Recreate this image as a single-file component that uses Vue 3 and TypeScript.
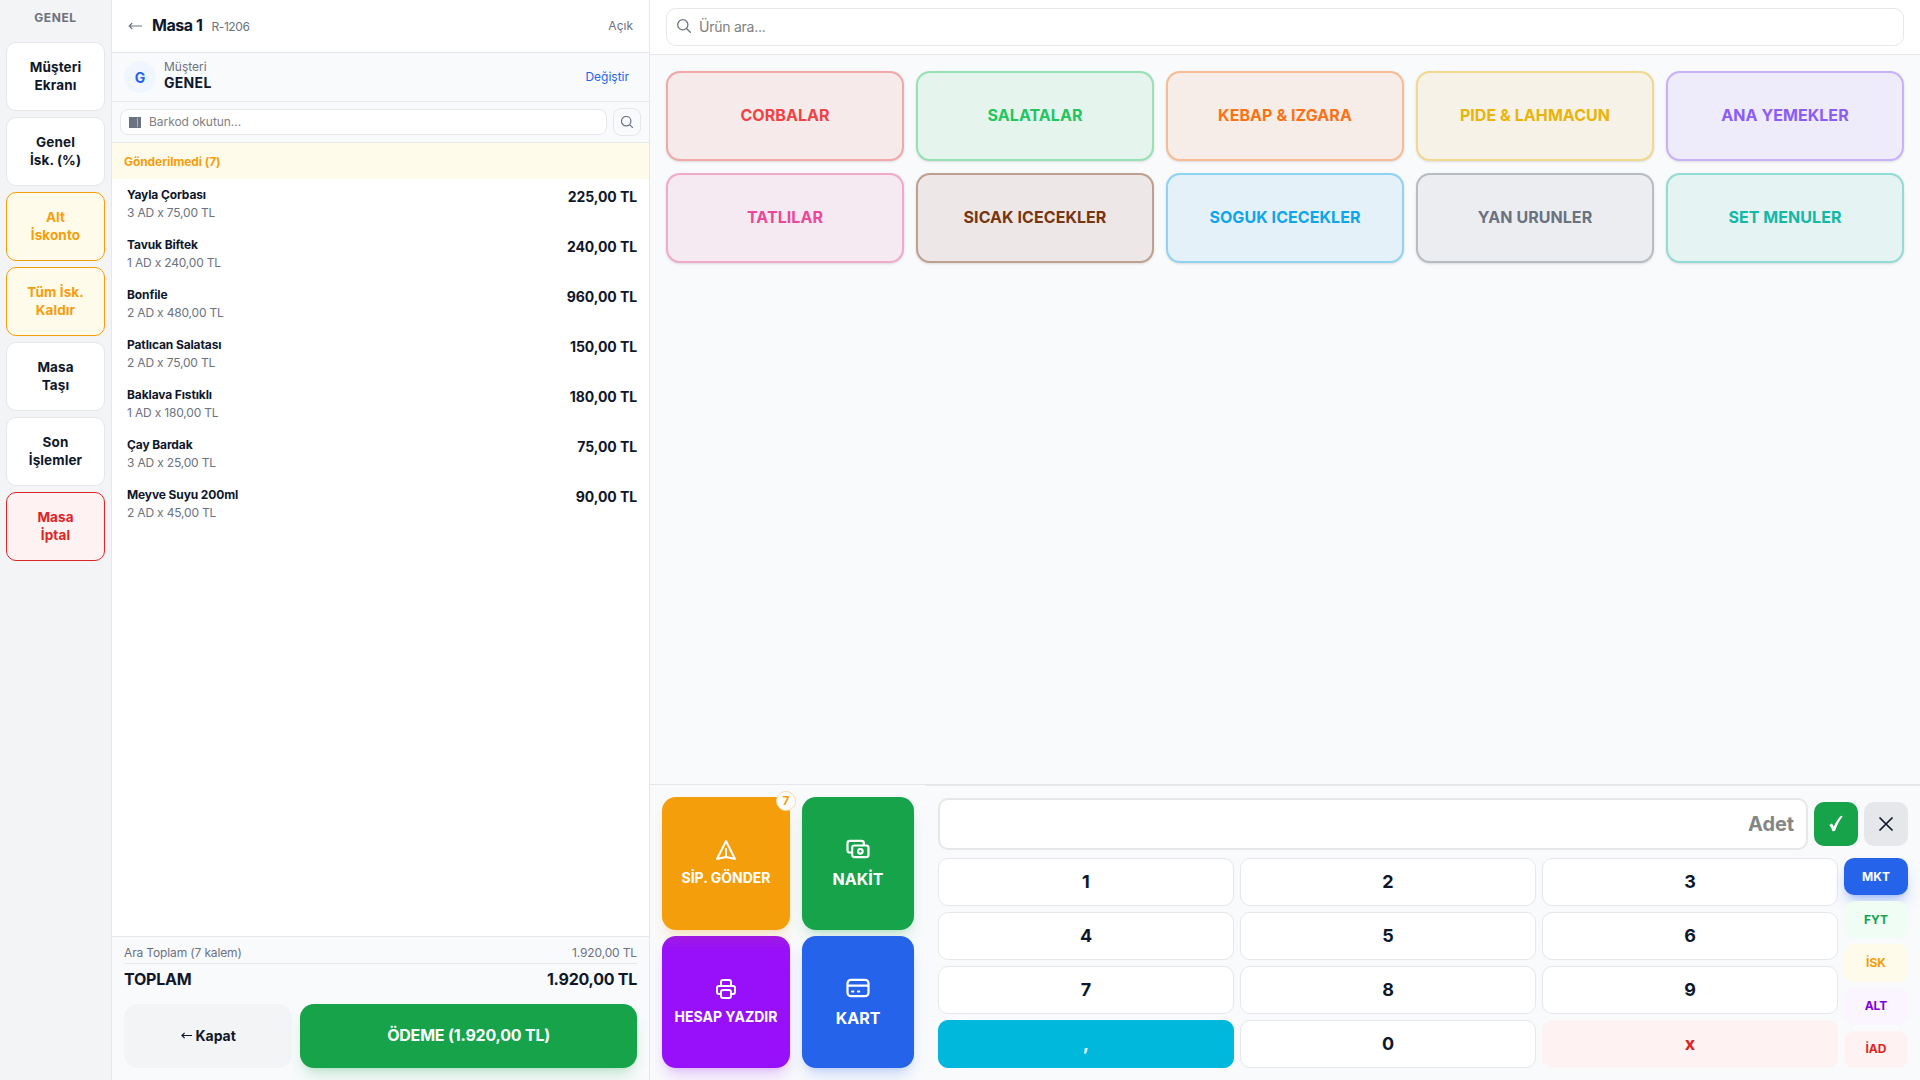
<script setup lang="ts">
interface SideAction { lines: [string, string]; tone: string }
interface OrderLine { name: string; detail: string; total: string }
interface Category { name: string; color: string }
interface Key { label: string; tone: string }

const actions: SideAction[] = [
  { lines: ['Müşteri', 'Ekranı'], tone: '' },
  { lines: ['Genel', 'İsk. (%)'], tone: '' },
  { lines: ['Alt', 'İskonto'], tone: 'warn' },
  { lines: ['Tüm İsk.', 'Kaldır'], tone: 'warn' },
  { lines: ['Masa', 'Taşı'], tone: '' },
  { lines: ['Son', 'İşlemler'], tone: '' },
  { lines: ['Masa', 'İptal'], tone: 'danger' },
]

const orderLines: OrderLine[] = [
  { name: 'Yayla Çorbası', detail: '3 AD x 75,00 TL', total: '225,00 TL' },
  { name: 'Tavuk Biftek', detail: '1 AD x 240,00 TL', total: '240,00 TL' },
  { name: 'Bonfile', detail: '2 AD x 480,00 TL', total: '960,00 TL' },
  { name: 'Patlıcan Salatası', detail: '2 AD x 75,00 TL', total: '150,00 TL' },
  { name: 'Baklava Fıstıklı', detail: '1 AD x 180,00 TL', total: '180,00 TL' },
  { name: 'Çay Bardak', detail: '3 AD x 25,00 TL', total: '75,00 TL' },
  { name: 'Meyve Suyu 200ml', detail: '2 AD x 45,00 TL', total: '90,00 TL' },
]

const categories: Category[] = [
  { name: 'CORBALAR', color: '#ef4444' },
  { name: 'SALATALAR', color: '#22c55e' },
  { name: 'KEBAP & IZGARA', color: '#f97316' },
  { name: 'PIDE & LAHMACUN', color: '#eab308' },
  { name: 'ANA YEMEKLER', color: '#8b5cf6' },
  { name: 'TATLILAR', color: '#ec4899' },
  { name: 'SICAK ICECEKLER', color: '#78350f' },
  { name: 'SOGUK ICECEKLER', color: '#0ea5e9' },
  { name: 'YAN URUNLER', color: '#6b7280' },
  { name: 'SET MENULER', color: '#14b8a6' },
]

const keys: Key[] = [
  ...['1', '2', '3', '4', '5', '6', '7', '8', '9'].map((label) => ({ label, tone: '' })),
  { label: ',', tone: 'comma' },
  { label: '0', tone: '' },
  { label: 'x', tone: 'clear' },
]

const modes: Key[] = [
  { label: 'MKT', tone: 'mkt' },
  { label: 'FYT', tone: 'fyt' },
  { label: 'İSK', tone: 'isk' },
  { label: 'ALT', tone: 'alt' },
  { label: 'İAD', tone: 'iad' },
]
</script>

<template>
  <div class="pos">
    <aside class="side">
      <div class="side-title">GENEL</div>
      <button v-for="a in actions" :key="a.lines.join()" class="side-btn" :class="a.tone">
        <span>{{ a.lines[0] }}</span><span>{{ a.lines[1] }}</span>
      </button>
    </aside>

    <section class="order">
      <header class="order-head">
        <svg class="back" width="14" height="8" viewBox="0 0 14 8"><path d="M14 4H1.200M4.200 1L1.200 4l3 3" fill="none" stroke="#6b7280" stroke-width="1.100" /></svg>
        <span class="table-name">Masa 1</span>
        <span class="receipt">R-1206</span>
        <span class="state">Açık</span>
      </header>
      <div class="customer">
        <div class="avatar">G</div>
        <div class="customer-text">
          <span class="customer-label">Müşteri</span>
          <span class="customer-name">GENEL</span>
        </div>
        <button class="change">Değiştir</button>
      </div>
      <div class="barcode">
        <div class="barcode-input">
          <svg width="12" height="11" viewBox="0 0 12 11"><path d="M0 0h12v11H0z" fill="#6b7280" /><path d="M8.500 .8v9.400" stroke="#b4b8bf" stroke-width=".9" /></svg>
          <span>Barkod okutun...</span>
        </div>
        <button class="barcode-search">
          <svg width="12" height="12" viewBox="0 0 12 12" fill="none" stroke="#6b7280" stroke-width="1.200" stroke-linecap="round"><circle cx="5.200" cy="5.200" r="4.700" /><path d="M8.600 8.600L11.600 11.600" /></svg>
        </button>
      </div>
      <div class="group-title">Gönderilmedi (7)</div>
      <div class="lines">
        <div v-for="l in orderLines" :key="l.name" class="line">
          <div class="line-info">
            <span class="line-name">{{ l.name }}</span>
            <span class="line-detail">{{ l.detail }}</span>
          </div>
          <span class="line-total">{{ l.total }}</span>
        </div>
      </div>
      <footer class="totals">
        <div class="subtotal"><span>Ara Toplam (7 kalem)</span><span>1.920,00 TL</span></div>
        <div class="total"><span>TOPLAM</span><span class="total-num">1.920,00 TL</span></div>
        <div class="pay-row">
          <button class="close-btn">
            <svg width="11" height="7" viewBox="0 0 11 7"><path d="M11 3.500H1M3.600 .9L1 3.500l2.600 2.600" fill="none" stroke="#0f172a" stroke-width="1.200" /></svg>
            <span>Kapat</span>
          </button>
          <button class="pay-btn">ÖDEME (1.920,00 TL)</button>
        </div>
      </footer>
    </section>

    <main class="main">
      <div class="topbar">
        <div class="search">
          <svg width="14" height="14" viewBox="0 0 14 14" fill="none" stroke="#6b7280" stroke-width="1.300" stroke-linecap="round"><circle cx="5.800" cy="5.800" r="5.100" /><path d="M9.500 9.500l3.800 3.800" /></svg>
          <span>Ürün ara...</span>
        </div>
      </div>
      <div class="catalog">
        <button v-for="c in categories" :key="c.name" class="cat" :style="{ '--c': c.color }">{{ c.name }}</button>
      </div>
      <div class="bottom">
        <div class="quick">
          <button class="q send">
            <svg width="24" height="24" viewBox="0 0 24 24" fill="none" stroke="#fff" stroke-width="2" stroke-linecap="round" stroke-linejoin="round"><path d="M12 19l9 2-9-18-9 18 9-2zm0 0v-8" /></svg>
            <span>SİP. GÖNDER</span>
            <i class="badge">7</i>
          </button>
          <button class="q big cash">
            <svg width="28" height="28" viewBox="0 0 24 24" fill="none" stroke="#fff" stroke-width="1.900" stroke-linecap="round" stroke-linejoin="round"><path d="M17 9V7a2 2 0 00-2-2H5a2 2 0 00-2 2v6a2 2 0 002 2h2m2 4h10a2 2 0 002-2v-6a2 2 0 00-2-2H9a2 2 0 00-2 2v6a2 2 0 002 2zm7-5a2 2 0 11-4 0 2 2 0 014 0z" /></svg>
            <span>NAKİT</span>
          </button>
          <button class="q print">
            <svg width="24" height="24" viewBox="0 0 24 24" fill="none" stroke="#fff" stroke-width="2" stroke-linecap="round" stroke-linejoin="round"><path d="M17 17h2a2 2 0 002-2v-4a2 2 0 00-2-2H5a2 2 0 00-2 2v4a2 2 0 002 2h2m2 4h6a2 2 0 002-2v-4a2 2 0 00-2-2H9a2 2 0 00-2 2v4a2 2 0 002 2zm8-12V5a2 2 0 00-2-2H9a2 2 0 00-2 2v4h10z" /></svg>
            <span>HESAP YAZDIR</span>
          </button>
          <button class="q big card">
            <svg width="28" height="28" viewBox="0 0 24 24" fill="none" stroke="#fff" stroke-width="1.900" stroke-linecap="round" stroke-linejoin="round"><path d="M3 10h18M7 15h1m4 0h1m-7 4h12a3 3 0 003-3V8a3 3 0 00-3-3H6a3 3 0 00-3 3v8a3 3 0 003 3z" /></svg>
            <span>KART</span>
          </button>
        </div>
        <div class="pad">
          <div class="pad-top">
            <div class="qty">Adet</div>
            <button class="ok">
              <svg width="16" height="18" viewBox="0 0 16 18"><path d="M1.200 10l2.600-1.400c.9.900 1.500 1.800 2 3.100C7.600 7.500 10 3.500 13 .8l1.700.4C11.500 5.200 9 10 7 15.900l-2.500.4C3.800 13.800 2.700 11.700 1.200 10z" fill="#fff" /></svg>
            </button>
            <button class="cancel">
              <svg width="16" height="16" viewBox="0 0 16 16"><path d="M1.500 1.500l13 13M14.500 1.500l-13 13" stroke="#0f172a" stroke-width="1.700" /></svg>
            </button>
          </div>
          <div class="pad-body">
            <div class="keys">
              <button v-for="k in keys" :key="k.label" class="key" :class="k.tone">{{ k.label }}</button>
            </div>
            <div class="modes">
              <button v-for="m in modes" :key="m.label" class="mode" :class="m.tone">{{ m.label }}</button>
            </div>
          </div>
        </div>
      </div>
    </main>
  </div>
</template>

<style>
body { margin: 0; overflow: hidden; }
</style>

<style scoped>
.pos, .pos * { box-sizing: border-box; }
.pos {
  display: flex;
  width: 100vw;
  height: 100vh;
  overflow: hidden;
  background: #f9fafc;
  color: #0f172a;
  font-family: Inter, "Liberation Sans", sans-serif;
  font-size: 14px;
}
button { font: inherit; color: inherit; border: 0; padding: 0; margin: 0; background: none; }
span { white-space: nowrap; }
svg { display: block; flex: none; }

.side { width: 112px; flex: none; display: flex; flex-direction: column; gap: 6px; padding: 6px; background: #f3f4f6; border-right: 1px solid #e5e7eb; }
.side-title { height: 30px; padding-top: 3px; text-align: center; font-size: 12px; line-height: 18px; font-weight: 650; letter-spacing: .6px; color: #6b7280; }
.side-btn { height: 69px; flex: none; display: flex; flex-direction: column; align-items: center; justify-content: center; padding-bottom: 2px; border: 1px solid #e5e7eb; border-radius: 10px; background: #fff; font-size: 13.500px; line-height: 18px; font-weight: 650; letter-spacing: .1px; }
.side-btn.warn { background: #fffbeb; border-color: #f59e0b; color: #f59e0b; }
.side-btn.danger { background: #fef2f2; border-color: #dc2626; color: #dc2626; }

.order { width: 538px; flex: none; display: flex; flex-direction: column; background: #fff; border-right: 1px solid #e5e7eb; }
.order-head { height: 53px; display: flex; align-items: center; padding: 0 16px 2px; border-bottom: 1px solid #e5e7eb; }
.back { margin: 2px 10px 0 0; }
.table-name { font-size: 16px; font-weight: 700; letter-spacing: -.45px; }
.receipt { margin: 3px 0 0 9px; font-size: 12px; letter-spacing: -.4px; color: #6b7280; }
.state { margin: 1px 0 0 auto; font-size: 12px; color: #6b7280; }
.customer { height: 49px; display: flex; align-items: center; gap: 8px; padding: 0 12px; background: #f9fafc; border-bottom: 1px solid #e5e7eb; }
.avatar { width: 32px; height: 32px; border-radius: 50%; display: grid; place-items: center; background: #eff6ff; color: #2563eb; font-weight: 700; font-size: 14px; }
.customer-text { display: flex; flex-direction: column; padding-bottom: 4px; }
.customer-label { font-size: 12px; line-height: 16px; color: #6b7280; }
.customer-name { font-size: 14px; line-height: 16px; font-weight: 700; letter-spacing: .3px; }
.change { margin-left: auto; padding: 0 8px 1px; font-size: 12px; color: #2563eb; }
.barcode { height: 41px; display: flex; align-items: center; gap: 6px; padding: 0 8px; background: #f9fafc; border-bottom: 1px solid #e5e7eb; }
.barcode-input { flex: 1; height: 26px; display: flex; align-items: center; gap: 8px; padding-left: 8px; border: 1px solid #e5e7eb; border-radius: 8px; background: #fff; font-size: 12px; letter-spacing: -.05px; color: #808080; }
.barcode-input span { padding-bottom: 1px; }
.barcode-search { width: 28px; height: 28px; display: grid; place-items: center; border: 1px solid #e5e7eb; border-radius: 8px; }
.group-title { height: 36px; padding: 1px 12px 0; line-height: 36px; background: #fffbeb; color: #f59e0b; font-size: 12px; font-weight: 700; letter-spacing: -.08px; }
.lines { flex: 1; }
.line { height: 50px; display: flex; justify-content: space-between; padding: 7px 12px 0 15px; }
.line-info { display: flex; flex-direction: column; }
.line-name { font-size: 12px; line-height: 18px; font-weight: 700; letter-spacing: -.12px; }
.line-detail { font-size: 12px; line-height: 18px; letter-spacing: -.18px; color: #6b7280; }
.line-total { font-size: 14px; line-height: 21px; font-weight: 700; letter-spacing: -.08px; }
.totals { height: 144px; padding: 8px 12px 12px; background: #f9fafc; border-top: 1px solid #e5e7eb; }
.subtotal { height: 19px; display: flex; justify-content: space-between; font-size: 12px; line-height: 16px; letter-spacing: -.14px; color: #6b7280; border-bottom: 1px solid #e5e7eb; }
.total { display: flex; justify-content: space-between; margin-top: 3px; height: 24px; font-size: 16px; line-height: 24px; font-weight: 700; letter-spacing: -.2px; }
.total-num { letter-spacing: -.25px; }
.pay-row { display: flex; gap: 8px; margin-top: 13px; height: 64px; }
.close-btn { flex: 1; display: flex; align-items: center; justify-content: center; gap: 4px; border-radius: 14px; background: #f3f4f6; font-size: 14px; letter-spacing: -.05px; font-weight: 700; padding-bottom: 1px; }
.pay-btn { flex: 2; padding-bottom: 2px; border-radius: 14px; background: #16a34a; color: #fff; font-size: 16px; font-weight: 700; letter-spacing: -.2px; box-shadow: 0 10px 15px -3px rgba(22, 163, 74, .2), 0 4px 6px -4px rgba(22, 163, 74, .2); }

.main { flex: 1; min-width: 0; display: flex; flex-direction: column; }
.topbar { height: 55px; padding: 8px 16px; background: #fff; border-bottom: 1px solid #e5e7eb; }
.search { height: 38px; display: flex; align-items: center; gap: 8px; padding: 0 10px 2px; border: 1px solid #e5e7eb; border-radius: 10px; font-size: 14px; letter-spacing: -.25px; color: #808080; }
.catalog { flex: 1; display: grid; grid-template-columns: repeat(5, 1fr); grid-auto-rows: 90px; gap: 12px; padding: 16px; align-content: start; }
.cat { padding-bottom: 2px; border: 2px solid color-mix(in srgb, var(--c) 40%, transparent); border-radius: 14px; background: color-mix(in srgb, var(--c) 8%, #f7f8fa); color: var(--c); font-size: 16px; font-weight: 650; letter-spacing: .06px; box-shadow: 0 1px 3px rgba(0, 0, 0, .1), 0 1px 2px -1px rgba(0, 0, 0, .1); }

.bottom { height: 296px; flex: none; display: flex; }
.quick { width: 276px; flex: none; display: grid; grid-template-columns: 128px 112px; grid-template-rows: 1fr 1fr; gap: 6px 12px; padding: 12px; border-top: 1px solid #e5e7eb; }
.q { position: relative; display: flex; flex-direction: column; align-items: center; justify-content: center; gap: 6px; border-radius: 14px; color: #fff; font-size: 14px; line-height: 20px; font-weight: 700; }
.q.big { font-size: 16px; gap: 4px; line-height: 24px; }
.send { background: #f59e0b; box-shadow: 0 10px 15px -3px rgba(245, 158, 11, .2), 0 4px 6px -4px rgba(245, 158, 11, .2); }
.cash { background: #16a34a; box-shadow: 0 10px 15px -3px rgba(22, 163, 74, .2), 0 4px 6px -4px rgba(22, 163, 74, .2); }
/* the upper card's shadow falls over the print card's top edge */
.print { background: linear-gradient(#a01ae0, #9810fa 14px); box-shadow: 0 10px 15px -3px rgba(152, 16, 250, .2), 0 4px 6px -4px rgba(152, 16, 250, .2); }
.card { background: #2563eb; box-shadow: 0 10px 15px -3px rgba(37, 99, 235, .2), 0 4px 6px -4px rgba(37, 99, 235, .2); }
.badge { position: absolute; top: -6px; right: -6px; width: 20px; height: 20px; display: grid; place-items: center; border: 1px solid #fed7aa; border-radius: 50%; background: #fff; color: #f59e0b; font-size: 12px; font-style: normal; font-weight: 700; line-height: 1; }
.pad { flex: 1; display: flex; flex-direction: column; gap: 8px; padding: 12px; border-top: 2px solid #e5e7eb; }
.pad-top { height: 52px; display: flex; align-items: center; gap: 6px; }
.qty { flex: 1; height: 52px; display: flex; align-items: center; justify-content: flex-end; padding: 0 12px; border: 2px solid #e5e7eb; border-radius: 10px; background: #fff; color: #858585; font-size: 20px; font-weight: 650; letter-spacing: -.1px; }
.ok, .cancel { width: 44px; height: 44px; display: grid; place-items: center; border-radius: 10px; }
.ok { background: #16a34a; }
.cancel { background: #e5e7eb; }
.pad-body { height: 210px; display: flex; gap: 6px; }
.keys { flex: 1; display: grid; grid-template-columns: repeat(3, 1fr); grid-template-rows: repeat(4, 1fr); gap: 6px; }
.key { padding-bottom: 1px; border: 1px solid #e5e7eb; border-radius: 10px; background: #fff; font-size: 18px; font-weight: 700; }
.key.comma { background: #00b8db; border-color: #00b8db; color: #fff; }
.key.clear { background: #fef2f2; border-color: #fef2f2; color: #dc2626; }
.modes { width: 64px; display: flex; flex-direction: column; gap: 6px; }
.mode { flex: 1; padding-bottom: 1px; border-radius: 10px; font-size: 12px; font-weight: 700; }
.mkt { background: #2563eb; color: #fff; box-shadow: 0 10px 15px -3px rgba(37, 99, 235, .3), 0 4px 6px -4px rgba(37, 99, 235, .3); }
.fyt { background: #f0fdf4; color: #16a34a; }
.isk { background: #fffbeb; color: #f59e0b; }
.alt { background: #faf5ff; color: #8200db; }
.iad { background: #fef2f2; color: #dc2626; }
</style>
